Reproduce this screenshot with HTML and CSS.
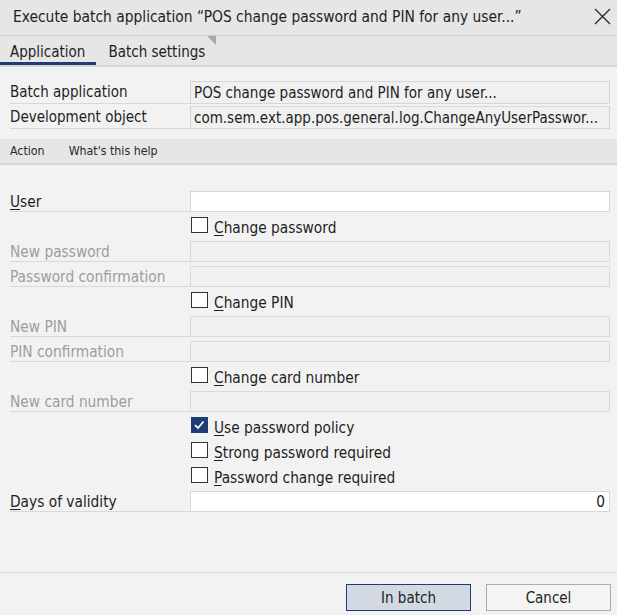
FILE: index.html
```html
<!DOCTYPE html>
<html lang="en">
<head>
<meta charset="utf-8">
<title>Execute batch application</title>
<link rel="stylesheet" href="styles.css">
</head>
<body>
<div class="dialog">
  <header class="titlebar">
    <span class="title">Execute batch application “POS change password and PIN for any user...”</span>
    <span class="close" aria-label="Close">
      <svg width="17" height="17" viewBox="0 0 17 17"><path d="M1 1 L16 16 M16 1 L1 16" stroke="#2b2b2b" stroke-width="1.4" fill="none"/></svg>
    </span>
  </header>

  <nav class="tabs main-tabs">
    <div class="tab active">Application</div>
    <div class="tab corner">Batch settings</div>
  </nav>

  <section class="info">
    <div class="row">
      <div class="label">Batch application</div>
      <div class="field ro">POS change password and PIN for any user...</div>
    </div>
    <div class="row">
      <div class="label">Development object</div>
      <div class="field ro">com.sem.ext.app.pos.general.log.ChangeAnyUserPasswor...</div>
    </div>
  </section>

  <nav class="tabs sub-tabs">
    <div class="tab active">Action</div>
    <div class="tab">What's this help</div>
  </nav>

  <main class="form">
    <div class="row">
      <div class="label"><u>U</u>ser</div>
      <div class="field input"></div>
    </div>
    <div class="row check-row">
      <div></div>
      <div class="check"><span class="box"></span><span class="ctext"><u>C</u>hange password</span></div>
    </div>
    <div class="row disabled">
      <div class="label">New password</div>
      <div class="field off"></div>
    </div>
    <div class="row disabled">
      <div class="label">Password confirmation</div>
      <div class="field off"></div>
    </div>
    <div class="row check-row">
      <div></div>
      <div class="check"><span class="box"></span><span class="ctext"><u>C</u>hange PIN</span></div>
    </div>
    <div class="row disabled">
      <div class="label">New PIN</div>
      <div class="field off"></div>
    </div>
    <div class="row disabled">
      <div class="label">PIN confirmation</div>
      <div class="field off"></div>
    </div>
    <div class="row check-row">
      <div></div>
      <div class="check"><span class="box"></span><span class="ctext"><u>C</u>hange card number</span></div>
    </div>
    <div class="row disabled">
      <div class="label">New card number</div>
      <div class="field off"></div>
    </div>
    <div class="row check-row">
      <div></div>
      <div class="check"><span class="box checked"><svg width="17" height="16" viewBox="0 0 17 16"><path d="M4 8.2 L7 11 L12.5 4.5" stroke="#ffffff" stroke-width="1.8" fill="none"/></svg></span><span class="ctext"><u>U</u>se password policy</span></div>
    </div>
    <div class="row check-row">
      <div></div>
      <div class="check"><span class="box"></span><span class="ctext"><u>S</u>trong password required</span></div>
    </div>
    <div class="row check-row">
      <div></div>
      <div class="check"><span class="box"></span><span class="ctext"><u>P</u>assword change required</span></div>
    </div>
    <div class="row">
      <div class="label"><u>D</u>ays of validity</div>
      <div class="field input num">0</div>
    </div>
  </main>

  <footer class="footer">
    <button class="btn primary">In batch</button>
    <button class="btn">Cancel</button>
  </footer>
</div>
</body>
</html>
```

FILE: styles.css
```css
html, body {
  margin: 0;
  padding: 0;
}
body {
  width: 617px;
  height: 615px;
  overflow: hidden;
  background: #f2f2f2;
  font-family: "DejaVu Sans Condensed", "DejaVu Sans", sans-serif;
  font-stretch: condensed;
  font-size: 15.3px;
  color: #1e1e1e;
}
.dialog {
  display: flex;
  flex-direction: column;
  height: 615px;
}
.titlebar {
  height: 35px;
  border-bottom: 1px solid #cdcdcd;
  background: #e6e6e6;
  display: flex;
  align-items: flex-start;
  justify-content: space-between;
  padding-left: 13px;
}
.title {
  font-size: 15.4px;
  line-height: 34px;
  white-space: nowrap;
  color: #1e1e1e;
}
.close {
  width: 17px;
  height: 17px;
  margin: 8px 6px 0 0;
  display: block;
}
.close svg { display: block; }

.tabs {
  display: flex;
  background: #e6e6e6;
  border-bottom: 2px solid #d6d6d6;
}
.main-tabs .tab {
  position: relative;
  font-size: 15px;
  padding: 6px 11px 0 10px;
  line-height: 20px;
  border-bottom: 3px solid transparent;
  white-space: nowrap;
}
.main-tabs .tab.corner {
  padding-left: 12px;
}
.tab.active {
  border-bottom-color: #1f3d73;
}
.tab.corner::after {
  content: "";
  position: absolute;
  top: 0;
  right: 0;
  border-top: 9px solid #a9a9a9;
  border-left: 9px solid transparent;
}
.sub-tabs .tab {
  font-size: 12.3px;
  padding: 3px 12px 0 12px;
  line-height: 19px;
  border-bottom: 2px solid transparent;
  color: #2a2a2a;
}
.sub-tabs .tab:first-child {
  padding-left: 10px;
}

.info {
  padding: 12px 7px 10px 10px;
}
.info .label,
.info .field {
  font-size: 15px;
}
.row {
  display: grid;
  grid-template-columns: 180px 1fr;
  height: 25px;
}
.label {
  border-bottom: 1px solid #d8d8d8;
  white-space: nowrap;
  overflow: hidden;
}
.info .label {
  padding-top: 3px;
  line-height: 21px;
}
.field {
  box-sizing: border-box;
  border: 1px solid #d6d6d6;
  white-space: nowrap;
  overflow: hidden;
}
.field.ro {
  margin-top: 2px;
  height: 23px;
  padding: 1px 0 0 3px;
  line-height: 20px;
  background: #f0f0f0;
}

.form {
  flex: 1;
  padding: 22px 7px 0 10px;
}
.form .label {
  padding-top: 6px;
  line-height: 18px;
}
.form .field {
  margin-top: 4px;
  height: 21px;
  padding: 1px 4px 0;
  line-height: 18px;
}
.field.input {
  background: #ffffff;
}
.field.off {
  background: #f0f0f0;
  border-color: #dadada;
}
.field.num {
  text-align: right;
}
.disabled .label {
  color: #9d9d9d;
}
.check {
  display: flex;
  align-items: flex-start;
  padding-top: 5px;
}
.box {
  box-sizing: border-box;
  width: 17px;
  height: 16px;
  margin-left: 1px;
  border: 1px solid #333333;
  background: #ffffff;
  flex: none;
}
.box.checked {
  background: #1f3d73;
  border-color: #1f3d73;
}
.box.checked svg {
  display: block;
  margin: -1px 0 0 -1px;
}
.ctext {
  margin-left: 6px;
  line-height: 20px;
  margin-top: -5px;
  padding-top: 6px;
  white-space: nowrap;
}
u {
  text-decoration: underline;
  text-underline-offset: 2px;
}

.footer {
  border-top: 1px solid #d6d6d6;
  padding: 11px 6px 4px 0;
  display: flex;
  justify-content: flex-end;
  gap: 15px;
}
.btn {
  box-sizing: border-box;
  width: 125px;
  height: 27px;
  margin: 0;
  padding: 1px 0 0;
  font: inherit;
  font-size: 15px;
  line-height: 24px;
  color: #222222;
  background: #f4f4f4;
  border: 1px solid #acacac;
  border-radius: 0;
}
.btn.primary {
  background: #d3d9e2;
  border-color: #1f3d73;
}
```
